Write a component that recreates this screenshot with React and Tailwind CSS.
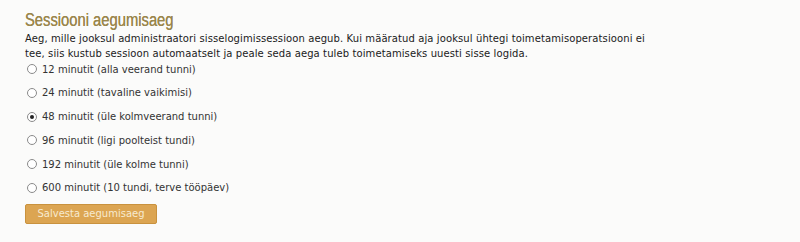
import React, { useState } from 'react'

const options = [
  { value: 12, label: '12 minutit (alla veerand tunni)' },
  { value: 24, label: '24 minutit (tavaline vaikimisi)' },
  { value: 48, label: '48 minutit (üle kolmveerand tunni)' },
  { value: 96, label: '96 minutit (ligi poolteist tundi)' },
  { value: 192, label: '192 minutit (üle kolme tunni)' },
  { value: 600, label: '600 minutit (10 tundi, terve tööpäev)' },
]

function Radio({ checked, onClick }) {
  return (
    <span onClick={onClick}
      className="w-[10px] h-[10px] rounded-full border border-[#8a8a8a] bg-white flex items-center justify-center shrink-0 cursor-pointer">
      {checked && <span className="w-[4px] h-[4px] rounded-full bg-[#222]" />}
    </span>
  )
}

export default function App() {
  const [selected, setSelected] = useState(48)

  return (
    <div className="w-[800px] h-[242px] bg-[#fbfbfa] pl-[25px] pt-[9px]" style={{ fontFamily: '"DejaVu Sans", Verdana, sans-serif' }}>
      {/* narrow title face isn't installed, squeeze Arial instead */}
      <h1 className="text-[18px] leading-[22px] text-[#9a864c] origin-left scale-x-[0.82] [text-shadow:0_0_0.3px_#9a864c]" style={{ fontFamily: '"Liberation Sans", Arial, sans-serif' }}>
        Sessiooni aegumisaeg
      </h1>
      <p className="text-[10px] leading-[15px] tracking-[0.1px] text-[#1a1a1a] w-[640px]">
        Aeg, mille jooksul administraatori sisselogimissessioon aegub. Kui määratud aja jooksul ühtegi toimetamisoperatsiooni ei tee, siis kustub sessioon automaatselt ja peale seda aega tuleb toimetamiseks uuesti sisse logida.
      </p>
      <div className="flex flex-col gap-[13.8px] mt-[3px] pl-[2px]">
        {options.map(o => (
          <label key={o.value} className="flex items-center gap-[5px] h-[10px] text-[10px] text-[#333]" onClick={() => setSelected(o.value)}>
            <Radio checked={selected === o.value} />
            <span>{o.label}</span>
          </label>
        ))}
      </div>
      <button className="mt-[11px] w-[132px] h-[20px] rounded-[2px] border border-[#c9923e] bg-[#dca552] text-[#f7ead0] text-[10px] leading-none" style={{ fontFamily: '"DejaVu Sans", Verdana, sans-serif' }}>
        Salvesta aegumisaeg
      </button>
    </div>
  )
}
